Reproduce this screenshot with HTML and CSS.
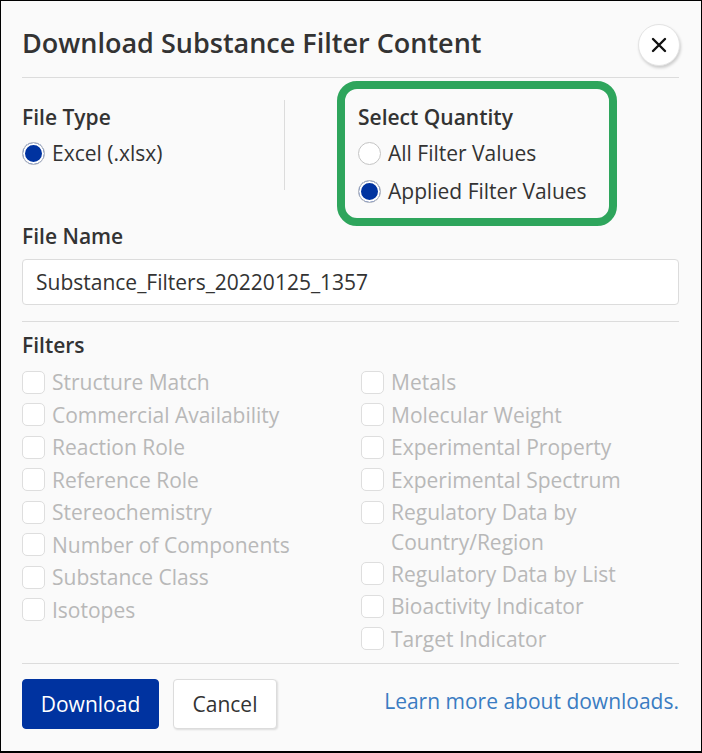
FILE: index.html
```html
<!DOCTYPE html>
<html lang="en">
<head>
<meta charset="utf-8">
<title>Download Substance Filter Content</title>
<link rel="stylesheet" href="styles.css">
</head>
<body>
<div class="dialog">
  <div class="header">
    <h1 class="title">Download Substance Filter Content</h1>
    <button class="close" aria-label="Close">
      <svg width="16" height="16" viewBox="0 0 16 16"><path d="M2 2 L14 14 M14 2 L2 14" stroke="#111" stroke-width="2.4" stroke-linecap="round"/></svg>
    </button>
  </div>
  <hr class="rule rule-top">
  <div class="options">
    <div class="col-type">
      <div class="label">File Type</div>
      <label class="radio-row"><span class="radio checked"></span>Excel (.xlsx)</label>
    </div>
    <div class="vdivider"></div>
    <div class="col-qty">
      <div class="label">Select Quantity</div>
      <label class="radio-row"><span class="radio"></span>All Filter Values</label>
      <label class="radio-row"><span class="radio checked"></span>Applied Filter Values</label>
    </div>
  </div>
  <div class="label label-name">File Name</div>
  <div class="input">Substance_Filters_20220125_1357</div>
  <hr class="rule rule-mid">
  <div class="label label-filters">Filters</div>
  <div class="filters">
    <div class="fcol">
      <div class="check"><span class="box"></span><span class="ctext">Structure Match</span></div>
      <div class="check"><span class="box"></span><span class="ctext">Commercial Availability</span></div>
      <div class="check"><span class="box"></span><span class="ctext">Reaction Role</span></div>
      <div class="check"><span class="box"></span><span class="ctext">Reference Role</span></div>
      <div class="check"><span class="box"></span><span class="ctext">Stereochemistry</span></div>
      <div class="check"><span class="box"></span><span class="ctext">Number of Components</span></div>
      <div class="check"><span class="box"></span><span class="ctext">Substance Class</span></div>
      <div class="check"><span class="box"></span><span class="ctext">Isotopes</span></div>
    </div>
    <div class="fcol">
      <div class="check"><span class="box"></span><span class="ctext">Metals</span></div>
      <div class="check"><span class="box"></span><span class="ctext">Molecular Weight</span></div>
      <div class="check"><span class="box"></span><span class="ctext">Experimental Property</span></div>
      <div class="check"><span class="box"></span><span class="ctext">Experimental Spectrum</span></div>
      <div class="check"><span class="box"></span><span class="ctext">Regulatory Data by Country/Region</span></div>
      <div class="check"><span class="box"></span><span class="ctext">Regulatory Data by List</span></div>
      <div class="check"><span class="box"></span><span class="ctext">Bioactivity Indicator</span></div>
      <div class="check"><span class="box"></span><span class="ctext">Target Indicator</span></div>
    </div>
  </div>
  <hr class="rule rule-bottom">
  <div class="footer">
    <button class="btn btn-primary">Download</button>
    <button class="btn btn-secondary">Cancel</button>
    <a class="learn" href="#">Learn more about downloads.</a>
  </div>
</div>
</body>
</html>
```

FILE: styles.css
```css
* { box-sizing: border-box; }
html, body { margin: 0; padding: 0; }
body {
  font-family: "Open Sans", "Noto Sans", sans-serif;
  color: #333;
  background: #fafafa;
}
.dialog {
  width: 702px;
  height: 753px;
  border: 1px solid #000;
  border-bottom-width: 2px;
  background: #fafafa;
  padding: 23px 22px 0 21px;
}
.header {
  display: flex;
  align-items: center;
  justify-content: space-between;
  height: 42px;
}
.title {
  margin: 0 0 5px 0;
  font-size: 27px;
  font-weight: 600;
  line-height: 34px;
  color: #333;
  white-space: nowrap;
}
.close {
  width: 42px;
  height: 42px;
  border-radius: 50%;
  border: 1px solid #e4e4e4;
  background: #fff;
  box-shadow: 1px 2px 3px rgba(0,0,0,0.18);
  display: flex;
  align-items: center;
  justify-content: center;
  padding: 0;
  margin-right: -1px;
  flex: none;
}
.rule {
  border: 0;
  border-top: 1px solid #dcdcdc;
  margin: 0;
}
.rule-top { margin-top: 11px; }
.options {
  display: flex;
  align-items: flex-start;
  margin-top: 24px;
}
.col-type { width: 262px; }
.vdivider {
  width: 1px;
  height: 90px;
  margin-top: -2px;
  background: #dcdcdc;
}
.col-qty {
  margin: -21px 0 -16px 52px;
  border: 8px solid #2ea55c;
  border-radius: 20px;
  padding: 13px 22px 8px 13px;
  background: #fafafa;
}
.label {
  font-size: 21px;
  font-weight: 600;
  line-height: 30px;
  color: #333;
}
.radio-row {
  display: flex;
  align-items: center;
  height: 38px;
  font-size: 21px;
  color: #333;
}
.col-type .radio-row { margin-top: 2px; }
.col-qty .label { margin-bottom: 2px; }
.radio {
  width: 23px;
  height: 23px;
  border-radius: 50%;
  border: 1px solid #c4c4c4;
  background: #fff;
  margin-right: 7px;
  flex: none;
}
.radio.checked {
  background: #0033a0;
  box-shadow: inset 0 0 0 2px #fff;
}
.label-name { margin-top: 11px; }
.input {
  margin-top: 8px;
  height: 46px;
  border: 1px solid #dcdcdc;
  border-radius: 4px;
  background: #fff;
  padding: 0 13px;
  font-size: 21px;
  line-height: 44px;
  color: #333;
}
.rule-mid { margin-top: 16px; }
.label-filters { margin-top: 8px; }
.filters {
  display: grid;
  grid-template-columns: 339px 1fr;
  margin-top: 6px;
}
.check {
  display: flex;
  align-items: flex-start;
  min-height: 32.5px;
  padding-top: 1.25px;
}
.box {
  width: 23px;
  height: 23px;
  border: 1px solid #dedede;
  border-radius: 5px;
  background: #fff;
  margin: 3.5px 7px 0 0;
  flex: none;
}
.ctext {
  font-size: 21px;
  line-height: 30px;
  color: #b8b8b8;
}
.rule-bottom { margin-top: 8px; }
.footer {
  display: flex;
  align-items: center;
  margin-top: 15px;
}
.btn {
  height: 50px;
  border-radius: 4px;
  font-family: "Open Sans", "Noto Sans", sans-serif;
  font-size: 21px;
  padding: 0;
}
.btn-primary {
  width: 137px;
  background: #0033a0;
  color: #fff;
  border: 1px solid #0033a0;
}
.btn-secondary {
  width: 104px;
  margin-left: 14px;
  background: #fff;
  color: #333;
  border: 1px solid #dcdcdc;
  box-shadow: 1px 1px 2px rgba(0,0,0,0.12);
}
.learn {
  margin-left: auto;
  margin-top: -6px;
  font-size: 21px;
  color: #3a7cc2;
  text-decoration: none;
}
```
